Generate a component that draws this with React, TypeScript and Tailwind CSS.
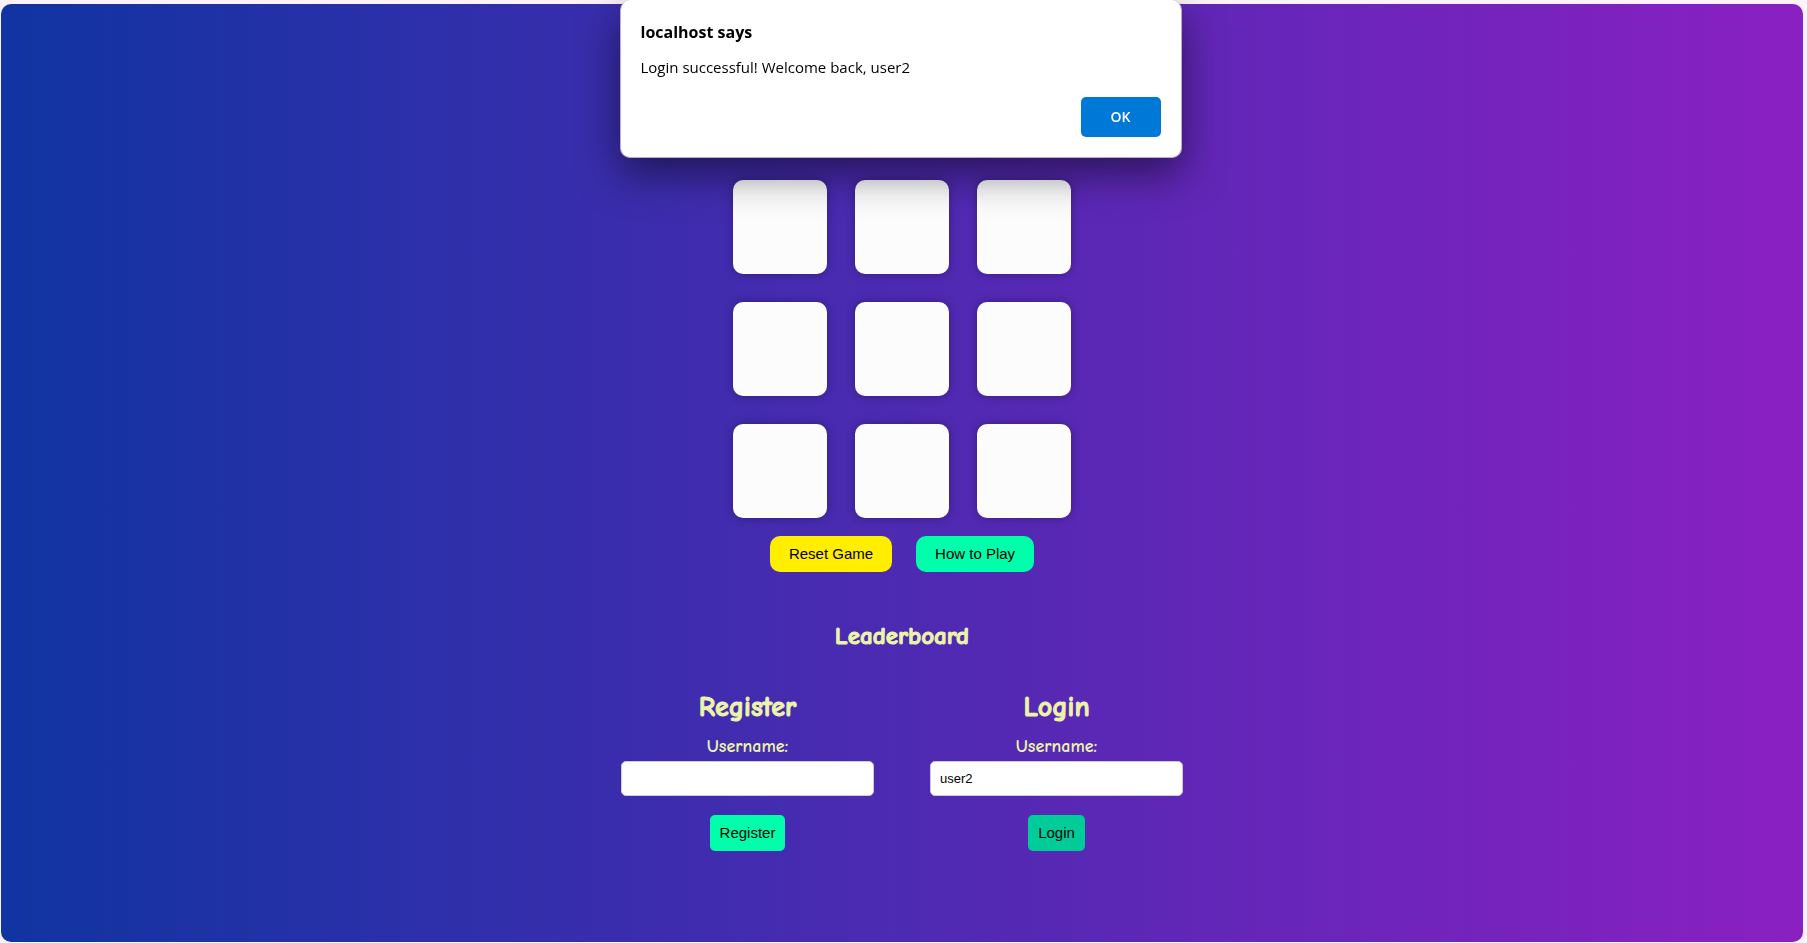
import { useId } from "react";

function Cell({ index }: { index: number }) {
  return (
    <button
      type="button"
      aria-label={`Cell ${index + 1}`}
      className="h-[94px] w-[94px] rounded-[10px] bg-[#fcfcfc] shadow-[0_0_10px_rgba(0,0,0,0.3)]"
    />
  );
}

function AccountForm({
  title,
  value,
  buttonClass,
}: {
  title: string;
  value: string;
  buttonClass: string;
}) {
  const id = useId();
  return (
    <form className="flex w-[253px] flex-col items-center" onSubmit={(e) => e.preventDefault()}>
      <h2 className="text-[28px] leading-9 font-bold [-webkit-text-stroke:1px]">{title}</h2>
      <label htmlFor={id} className="mt-[10px] text-[18px] leading-6 font-bold">
        Username:
      </label>
      <input
        id={id}
        type="text"
        defaultValue={value}
        className="mt-[2px] h-[35px] w-full rounded-[5px] border border-[#cccccc] bg-white px-[9px] font-['Liberation_Sans',sans-serif] text-[13px] text-black"
      />
      <button
        type="submit"
        className={`mt-[19px] h-9 rounded-[5px] px-[10px] font-['Liberation_Sans',sans-serif] text-[15px] text-black ${buttonClass}`}
      >
        {title}
      </button>
    </form>
  );
}

function AlertDialog() {
  return (
    <div className="fixed inset-x-0 top-0 flex justify-center pr-1.5">
      <div
        role="alertdialog"
        aria-labelledby="alert-title"
        aria-describedby="alert-text"
        className="flex w-[562px] flex-col rounded-[10px] border border-t-0 border-[#b9a9dc] bg-white px-5 pt-5 pb-5 font-['Open_Sans',sans-serif] text-black shadow-[0_16px_40px_rgba(0,0,0,0.5)]"
      >
        <h1 id="alert-title" className="text-base leading-6 font-bold">
          localhost says
        </h1>
        <p id="alert-text" className="mt-[11px] text-[15px] leading-6">
          Login successful! Welcome back, user2
        </p>
        <button
          type="button"
          className="mt-[18px] h-10 w-20 self-end rounded-[5px] bg-[#0078d7] text-sm font-semibold text-white"
        >
          OK
        </button>
      </div>
    </div>
  );
}

export default function App() {
  return (
    <div className="flex min-h-screen flex-col bg-[#fdf2fb] pt-1 pr-1 pb-px pl-px">
      <main className="flex flex-1 flex-col items-center rounded-[10px] bg-linear-to-r/srgb from-[#1034a2] to-[#8a20c2] pt-44 pb-[90px] font-['Comic_Sans_MS','Comic_Neue',cursive] text-[#ecf4a8]">
        <div className="grid grid-cols-3 gap-7">
          {Array.from({ length: 9 }, (_, i) => (
            <Cell key={i} index={i} />
          ))}
        </div>
        <div className="mt-[18px] flex gap-6 font-['Liberation_Sans',sans-serif] text-[15px] text-black">
          <button type="button" className="h-9 rounded-[10px] bg-[#ffee00] px-[19px]">
            Reset Game
          </button>
          <button type="button" className="h-9 rounded-[10px] bg-[#00ffaa] px-[19px]">
            How to Play
          </button>
        </div>
        <h2 className="mt-[46px] text-[25px] leading-9 font-bold [-webkit-text-stroke:1px]">Leaderboard</h2>
        <div className="mt-[35px] flex gap-14">
          <AccountForm title="Register" value="" buttonClass="bg-[#00ffaa]" />
          <AccountForm title="Login" value="user2" buttonClass="bg-[#00cc99]" />
        </div>
      </main>
      <AlertDialog />
    </div>
  );
}
